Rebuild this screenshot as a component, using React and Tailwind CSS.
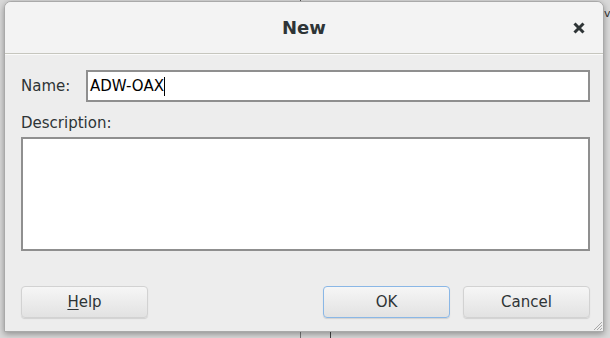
import React from "react";

const font = { fontFamily: '"DejaVu Sans", "Liberation Sans", sans-serif' };

function Button({ children, focused }) {
  return (
    <button
      className={
        "w-[127px] h-[32px] rounded-[4px] border text-[15px] text-[#2e3436] bg-gradient-to-b from-[#f6f6f6] via-[#ececec] to-[#e2e2e2] shadow-[0_1px_1px_rgba(0,0,0,0.12)] " +
        (focused ? "border-[#8ab7e6]" : "border-[#d2d2d2]")
      }
      style={font}
    >
      {children}
    </button>
  );
}

export default function App() {
  return (
    <div className="relative w-[610px] h-[338px] overflow-hidden bg-[#d9d9d9]" style={font}>
      {/* background window bits peeking out */}
      <div className="absolute left-[300px] top-0 w-px h-[4px] bg-[#555]" />
      <div className="absolute left-[300px] top-[330px] w-px h-[8px] bg-[#777]" />
      <div className="absolute left-[330px] top-[330px] w-px h-[8px] bg-[#444]" />
      <div className="absolute left-[604px] top-[8px] text-[11px] leading-none text-[#333]">v</div>

      <div className="absolute left-[4px] top-[1px] w-[600px] h-[331px] flex flex-col rounded-t-[7px] border border-[#a9a9a9] bg-[#ededed] shadow-[0_2px_6px_rgba(0,0,0,0.35)] overflow-hidden">
        {/* title bar */}
        <div className="relative h-[52px] shrink-0 flex items-center justify-center bg-[#f3f3f3] border-b border-[#c6c6be]">
          <span className="text-[18px] font-bold text-[#2e3436]">New</span>
          <svg
            className="absolute right-[18px] top-[20px]"
            width="12"
            height="12"
            viewBox="0 0 12 12"
          >
            <path d="M1.5 1.5 L10.5 10.5 M10.5 1.5 L1.5 10.5" stroke="#2e3436" strokeWidth="3" strokeLinecap="butt" />
          </svg>
        </div>
        <div className="h-px bg-[#fafafa]" />

        {/* body */}
        <div className="flex-1 flex flex-col pl-[16px] pr-[13px] pt-[15px] relative">
          <div className="flex items-center">
            <span className="w-[65px] text-[15px] text-[#2e3436]">Name:</span>
            <div className="flex-1 h-[32px] flex items-center bg-white border-2 border-[#8f8f8f] pl-[2px] text-[15px] text-black">
              ADW-OAX
              <span className="w-px h-[19px] bg-black" />
            </div>
          </div>

          <div className="mt-[10px] text-[15px] text-[#2e3436] leading-[22px]">Description:</div>
          <div className="mt-[3px] h-[114px] bg-white border-2 border-[#8f8f8f]" />

          <div className="mt-[35px] flex items-center">
            <Button>
              <span className="underline underline-offset-2">H</span>elp
            </Button>
            <div className="flex-1" />
            <Button focused>OK</Button>
            <div className="w-[13px]" />
            <Button>Cancel</Button>
          </div>

          {/* resize grip */}
          <svg className="absolute right-[1px] bottom-[1px]" width="9" height="9" viewBox="0 0 9 9">
            <path d="M9 1 L1 9 M9 4 L4 9 M9 7 L7 9" stroke="#a8a8a8" strokeWidth="1" />
          </svg>
        </div>
      </div>
    </div>
  );
}
